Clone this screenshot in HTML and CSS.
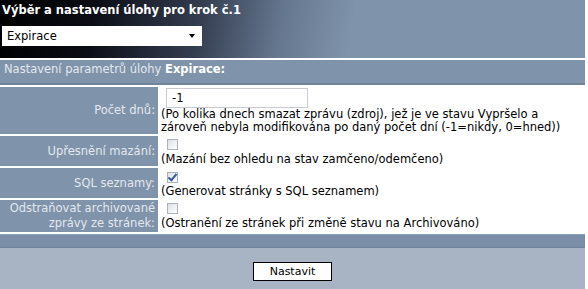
FILE: index.html
```html
<!DOCTYPE html>
<html lang="cs">
<head>
  <meta charset="UTF-8" />
  <title>Výběr a nastavení úlohy</title>
  <link rel="stylesheet" href="styles.css">
</head>
<body>
  <div class="page">
    <div class="header">
      <h2>Výběr a nastavení úlohy pro krok č.1</h2>
      <div class="select">
        <span>Expirace</span>
        <span class="arrow"></span>
      </div>
    </div>

    <div class="params-title">Nastavení parametrů úlohy <b>Expirace:</b></div>

    <table class="params">
      <tr class="row-days">
        <td class="label">Počet dnů:</td>
        <td class="value">
          <input type="text" class="text-input" value="-1">
          (Po kolika dnech smazat zprávu (zdroj), jež je ve stavu Vypršelo a zároveň nebyla modifikována po daný počet dní (-1=nikdy, 0=hned))
        </td>
      </tr>
      <tr class="row-lock">
        <td class="label">Upřesnění mazání:</td>
        <td class="value">
          <span class="check"></span>
          (Mazání bez ohledu na stav zamčeno/odemčeno)
        </td>
      </tr>
      <tr class="row-sql">
        <td class="label">SQL seznamy:</td>
        <td class="value">
          <span class="check checked"></span>
          (Generovat stránky s SQL seznamem)
        </td>
      </tr>
      <tr class="row-archive">
        <td class="label">Odstraňovat archivované zprávy ze stránek:</td>
        <td class="value">
          <span class="check"></span>
          (Ostranění ze stránek při změně stavu na Archivováno)
        </td>
      </tr>
    </table>

    <div class="footer-line"></div>
    <div class="footer">
      <button class="btn">Nastavit</button>
    </div>
  </div>
</body>
</html>
```

FILE: styles.css
```css
body {
  margin: 0;
  font-family: "DejaVu Sans", Verdana, sans-serif;
  font-size: 11.5px;
  background: #fff;
}
.page {
  width: 585px;
  background: #fff;
}
.header {
  height: 58px;
  background: linear-gradient(100deg, #000 0%, #0b0d15 16%, #343d50 34%, #65778f 48%, #7f93ab 60%);
  padding: 0 2px;
  box-sizing: border-box;
}
.header h2 {
  margin: 0;
  padding-top: 3px;
  font-size: 11.5px;
  font-weight: bold;
  color: #fff;
  line-height: 14px;
}
.select {
  margin-top: 9px;
  width: 200px;
  height: 20px;
  background: #fff;
  display: flex;
  align-items: center;
  justify-content: space-between;
  padding: 0 7px 0 5px;
  box-sizing: border-box;
  color: #000;
}
.arrow {
  width: 0;
  height: 0;
  border-left: 3px solid transparent;
  border-right: 3px solid transparent;
  border-top: 4px solid #000;
}
.params-title {
  margin-top: 2px;
  height: 25px;
  background: #7f93ab;
  border-bottom: 2px solid #71849c;
  color: #e4e8ee;
  padding: 2px 4px 0;
  box-sizing: border-box;
  line-height: 14px;
}
.params-title b {
  color: #fff;
}
.params {
  border-collapse: separate;
  border-spacing: 2px;
  margin: 0 -2px;
  width: 589px;
}
.params td {
  padding: 0;
  line-height: 13px;
}
.label {
  width: 155px;
  background: #7f93ab;
  color: #e4e8ee;
  text-align: right;
  padding-right: 3px !important;
}
.row-archive .label {
  line-height: 15px !important;
}
.value {
  background: #fff;
  color: #000;
  padding-left: 1px !important;
  vertical-align: top;
}
.row-days td { height: 47px; }
.row-lock td { height: 30px; }
.row-sql td { height: 29px; }
.row-archive td { height: 32px; }
.text-input {
  display: block;
  width: 142px;
  height: 20px;
  margin: 1px 0 0 5px;
  box-sizing: border-box;
  border: 1px solid #c8ccd2;
  padding: 0 5px;
  font-family: inherit;
  font-size: 11.5px;
}
.check {
  display: block;
  width: 9px;
  height: 9px;
  border: 1px solid #aab2bc;
  background: linear-gradient(135deg, #dde1e6, #fff);
  margin: 3px 0 3px 6px;
  position: relative;
}
.row-sql .check {
  margin-top: 4px;
  margin-bottom: 2px;
}
.check.checked::after {
  content: "";
  position: absolute;
  left: 2px;
  top: -1px;
  width: 3px;
  height: 7px;
  border: solid #3a5a9a;
  border-width: 0 2px 2px 0;
  transform: rotate(40deg);
}
.footer-line {
  height: 12px;
  background: #7a8ea8;
  border-top: 1px solid #8aa0ba;
  border-bottom: 1px solid #6f839d;
}
.footer {
  height: 44px;
  background: #a8b4c4;
  display: flex;
  justify-content: center;
  padding-top: 14px;
  box-sizing: border-box;
}
.btn {
  width: 79px;
  height: 19px;
  background: #fff;
  border: 1px solid #000;
  font-family: inherit;
  font-size: 11px;
  color: #000;
  padding: 0;
}
```
